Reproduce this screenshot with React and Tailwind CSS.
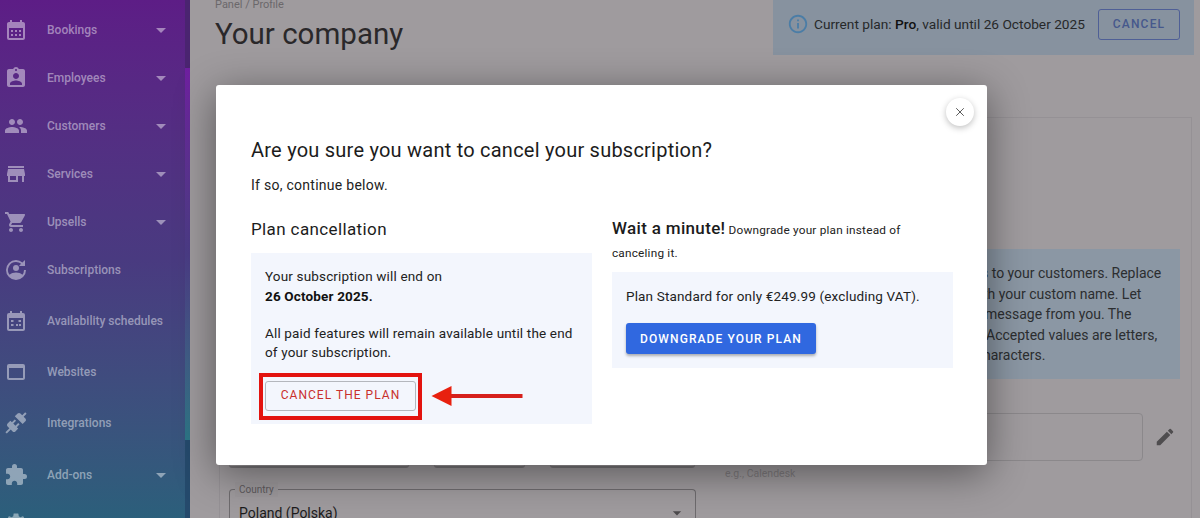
import React from 'react';
import { X } from 'lucide-react';
import {
  MdCalendarMonth,
  MdAssignmentInd,
  MdPeople,
  MdStore,
  MdShoppingCart,
  MdWebAsset,
  MdExtension,
  MdArrowDropDown,
  MdInfoOutline,
  MdEdit,
  MdSettings,
} from 'react-icons/md';

function SubscriptionsIcon({ className }) {
  return (
    <svg viewBox="0 0 24 24" fill="currentColor" className={className}>
      <path d="M12 2a10 10 0 1 0 10 10h-2a8 8 0 0 1-1.6 4.8C16.9 15.300 14.300 14.600 12 14.600s-4.900.7-6.400 2.200A8 8 0 0 1 12 4c1.900 0 3.600.7 5 1.800L15 8h6V2l-2.600 2.600A10 10 0 0 0 12 2z" />
      <circle cx="12" cy="10" r="3" />
    </svg>
  );
}

function ScheduleIcon({ className }) {
  return (
    <svg viewBox="0 0 24 24" fill="currentColor" className={className}>
      <path d="M19 4h-1V2h-2v2H8V2H6v2H5a2 2 0 0 0-2 2v14a2 2 0 0 0 2 2h14a2 2 0 0 0 2-2V6a2 2 0 0 0-2-2zm0 16H5V9h14v11z" />
      <path d="M7 11h2.500v2H7zM14.500 11H17v2h-2.500zM7 15h2.500v2H7zM12 15h2v2h-2zM15 15h2v2h-2z" />
    </svg>
  );
}

function PlugIcon({ className }) {
  return (
    <svg viewBox="0 0 24 24" fill="currentColor" className={className}>
      <path d="M21.400 7.500C22.200 8.300 22.200 9.600 21.400 10.300L18.600 13.100L10.800 5.300L13.600 2.500C14.400 1.700 15.700 1.700 16.400 2.500L18.200 4.300L21.200 1.300L22.600 2.700L19.600 5.700L21.400 7.500M15.600 13.300L14.200 11.900L11.400 14.700L9.300 12.600L12.100 9.800L10.700 8.400L7.900 11.200L6.400 9.800L3.600 12.600C2.800 13.400 2.800 14.700 3.600 15.400L5.400 17.200L1.400 21.200L2.800 22.600L6.800 18.600L8.600 20.400C9.400 21.200 10.700 21.200 11.400 20.400L14.200 17.600L12.800 16.200L15.600 13.300Z" />
    </svg>
  );
}

const menu = [
  { label: 'Bookings', icon: MdCalendarMonth, arrow: true },
  { label: 'Employees', icon: MdAssignmentInd, arrow: true },
  { label: 'Customers', icon: MdPeople, arrow: true },
  { label: 'Services', icon: MdStore, arrow: true },
  { label: 'Upsells', icon: MdShoppingCart, arrow: true },
  { label: 'Subscriptions', icon: SubscriptionsIcon },
  { label: 'Availability schedules', icon: ScheduleIcon, spaced: true },
  { label: 'Websites', icon: MdWebAsset, spaced: true },
  { label: 'Integrations', icon: PlugIcon, spaced: true },
  { label: 'Add-ons', icon: MdExtension, arrow: true, spaced: true },
  { label: '', icon: MdSettings },
];

function MenuItem({ item }) {
  const Icon = item.icon;
  return (
    <div className={`flex h-[48px] shrink-0 items-center pl-[4px] pr-[12px] text-white/45 ${item.spaced ? 'mt-[3.3px]' : ''}`}>
      <Icon className="h-[24px] w-[24px] shrink-0" />
      <span className="ml-[19px] flex-1 text-[12px] font-medium">{item.label}</span>
      {item.arrow && <MdArrowDropDown className="h-[24px] w-[24px]" />}
    </div>
  );
}

function Sidebar() {
  return (
    <aside className="flex h-[518px] w-[190px] shrink-0 bg-gradient-to-b from-[#5d1d86] via-[#493a80] to-[#2b5f7b]">
      <nav className="flex-1 overflow-hidden pt-[5.5px]">
        {menu.map((item, i) => (
          <MenuItem key={i} item={item} />
        ))}
      </nav>
      <div className="flex w-[5px] shrink-0 flex-col">
        <div className="h-[68px] bg-[#4a2470]" />
        <div className="h-[372px] bg-gradient-to-b from-[#6f1fa0] via-[#4b3c86] to-[#2c7686]" />
        <div className="flex-1 bg-[#254a6c]" />
      </div>
    </aside>
  );
}

function Background() {
  return (
    <main className="flex min-w-0 flex-1 flex-col overflow-hidden bg-[#9f9b9e]">
      <header className="flex h-[55px] shrink-0 justify-between pl-[25px] pr-[6px]">
        <div>
          <div className="text-[11px] leading-[9px] text-[#6b686b]">Panel / Profile</div>
          <h1 className="mt-[7px] text-[29.500px] leading-[36px] text-[#2a282a]">Your company</h1>
        </div>
        <div className="flex h-[55px] w-[421px] items-center bg-[#87929f] pb-[7px] pl-[14px] pr-[14px]">
          <MdInfoOutline className="h-[22px] w-[22px] shrink-0 text-[#4b7da6]" />
          <p className="ml-[5px] flex-1 text-[13.700px] text-[#262829]">
            Current plan: <b className="font-medium text-[#111]">Pro</b>, valid until 26 October 2025
          </p>
          <div className="flex h-[31px] w-[82px] shrink-0 items-center justify-center rounded-[3px] border border-[#4f5f96] text-[12px] font-medium tracking-[1.200px] text-[#46588c]">
            CANCEL
          </div>
        </div>
      </header>

      <div className="mt-[62px] grid flex-1 grid-cols-[486px_1fr] gap-[16px] pl-[29px] pr-[8px]">
        <section className="flex flex-col justify-end border-l border-[#959195] px-[9px]">
          <div className="mb-[21px] flex h-[3px] gap-[25px] pr-[1px]">
            <div className="h-full w-[180px] rounded-b-[3px] border-b-2 border-[#7a777a]" />
            <div className="h-full w-[91px] rounded-b-[3px] border-b-2 border-[#7a777a]" />
            <div className="h-full flex-1 rounded-b-[3px] border-b-2 border-[#7a777a]" />
          </div>
          <div className="relative h-[29px] rounded-t-[4px] border border-b-0 border-[#6e6b6e] pl-[9px] pt-[13px]">
            <span className="absolute -top-[8px] left-[5px] bg-[#9c989b] px-[4px] text-[10px] text-[#5c595c]">Country</span>
            <div className="flex items-center justify-between pr-[8px] text-[14px] leading-[16px] text-[#1c1b1c]">
              Poland (Polska)
              <MdArrowDropDown className="h-[20px] w-[20px] text-[#4c4a4c]" />
            </div>
          </div>
        </section>
        <section className="flex flex-col border-r border-t border-[#959195] pl-[260px] pr-[10px] pt-[131px]">
          <div className="-ml-[10px] h-[130px] w-[209px] bg-[#8b97a4] pl-[10px] pt-[14px] text-[14px] leading-[20.500px] text-[#2c2e30]">
            <p className="whitespace-nowrap">s to your customers. Replace</p>
            <p className="ml-[2px] whitespace-nowrap">th your custom name. Let</p>
            <p className="ml-[4px] whitespace-nowrap">message from you. The</p>
            <p className="ml-[5px] whitespace-nowrap">Accepted values are letters,</p>
            <p className="ml-[2px] whitespace-nowrap">haracters.</p>
          </div>
          <div className="mt-[34px] flex items-center">
            <div className="h-[48px] w-[162px] shrink-0 rounded-[4px] border border-[#8b888b]" />
            <MdEdit className="ml-[11px] h-[22px] w-[22px] shrink-0 text-[#4f4d4f]" />
          </div>
          <p className="-ml-[256px] mt-[5px] text-[10.500px] leading-[15px] text-[#7f7c7f]">e.g., Calendesk</p>
        </section>
      </div>
    </main>
  );
}

function Arrow() {
  return (
    <svg width="94" height="22" viewBox="0 0 94 22" className="shrink-0">
      <path d="M20 9h71.500v4H20z" fill="#d6201c" />
      <path d="M0.500 11 L20.500 1 V21 Z" fill="#e8200f" />
    </svg>
  );
}

function CancelModal() {
  return (
    <div className="absolute left-[216px] top-[85px] h-[380px] w-[771px] rounded-[3px] bg-white pl-[35px] pr-[34px] pt-[52px] shadow-[0_8px_40px_rgba(0,0,0,0.45)]">
      <button className="absolute right-[13px] top-[13px] flex h-[28px] w-[28px] items-center justify-center rounded-full bg-white text-[#444] shadow-[0_2px_6px_rgba(0,0,0,0.25)]">
        <X className="h-[14px] w-[14px]" strokeWidth={1.5} />
      </button>
      <h2 className="text-[20px] leading-[26px] tracking-[0.23px] text-[#1c1c1c]">
        Are you sure you want to cancel your subscription?
      </h2>
      <p className="mt-[12px] text-[14px] leading-[20px] tracking-[0.27px] text-[#222]">If so, continue below.</p>

      <div className="mt-[22px] grid grid-cols-2 gap-[20px]">
        <div>
          <h3 className="text-[17px] leading-[24px] tracking-[0.38px] text-[#1c1c1c]">Plan cancellation</h3>
          <div className="mt-[12px] h-[171px] bg-[#f3f6fd] px-[14px] pt-[14px] text-[13.500px] leading-[19.500px] tracking-[0.16px] text-[#222]">
            <p>Your subscription will end on</p>
            <p className="font-bold text-[#111]">26 October 2025.</p>
            <p className="mt-[17.500px]">All paid features will remain available until the end of your subscription.</p>
            <div className="-ml-[6px] mt-[10px] flex items-center">
              <div className="border-[4px] border-[#e3130f] px-[2px] py-[4.500px]">
                <button className="flex h-[30px] w-[151px] items-center justify-center rounded-[3px] border border-[#b4b7bd] text-[12px] tracking-[1.030px] text-[#c9302c]">
                  CANCEL THE PLAN
                </button>
              </div>
              <div className="ml-[9px]">
                <Arrow />
              </div>
            </div>
          </div>
        </div>
        <div>
          <p className="text-[11.800px] leading-[23px] tracking-[0.2px] text-[#222]">
            <span className="text-[17px] font-medium tracking-[0.33px] text-[#1c1c1c]">Wait a minute!</span> Downgrade your plan instead of canceling it.
          </p>
          <div className="mt-[7px] h-[96px] bg-[#f3f6fd] px-[14px] pt-[14px]">
            <p className="text-[13.500px] leading-[20px] tracking-[0.16px] text-[#222]">Plan Standard for only €249.99 (excluding VAT).</p>
            <button className="mt-[17px] flex h-[31px] w-[190px] items-center justify-center rounded-[3px] bg-[#3068e0] text-[12px] font-medium tracking-[1.100px] text-white shadow-[0_2px_3px_rgba(0,0,0,0.3)]">
              DOWNGRADE YOUR PLAN
            </button>
          </div>
        </div>
      </div>
    </div>
  );
}

export default function App() {
  return (
    <div className="relative flex h-[518px] w-[1200px] overflow-hidden font-['Roboto',sans-serif]">
      <Sidebar />
      <Background />
      <CancelModal />
    </div>
  );
}
